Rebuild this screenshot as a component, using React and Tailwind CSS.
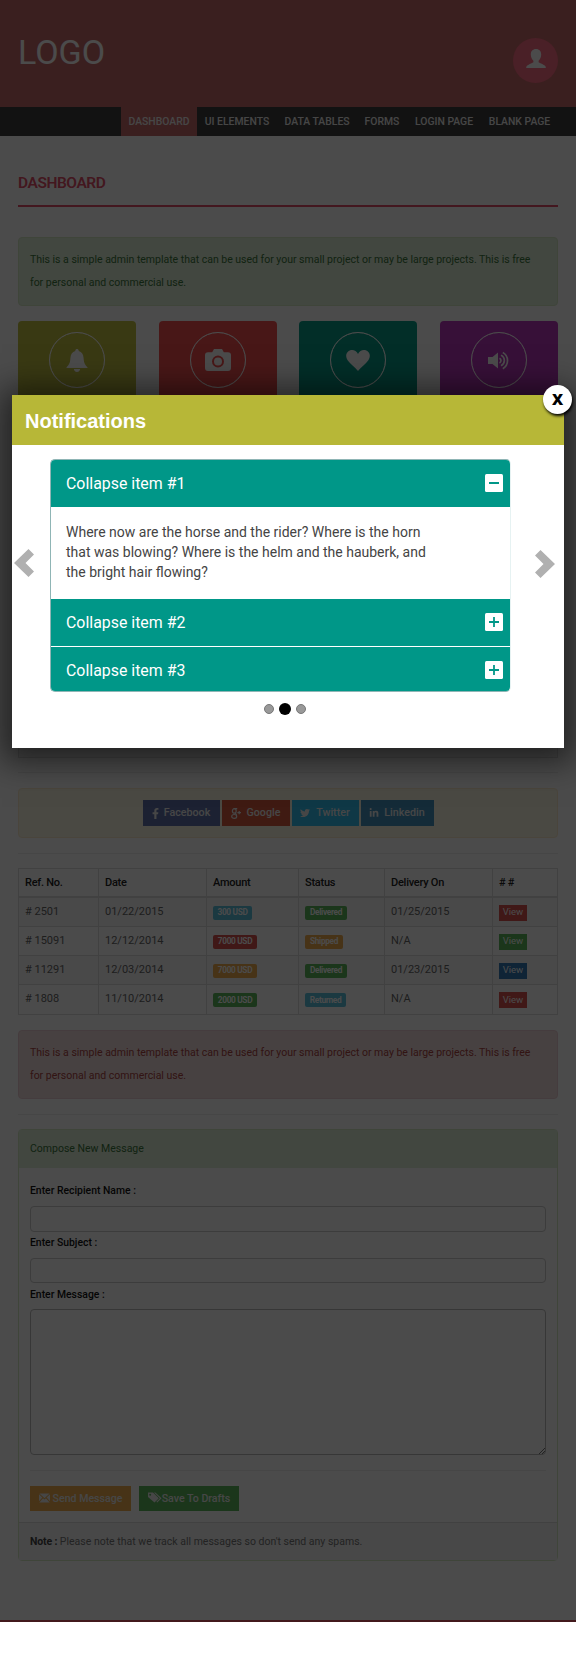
import React from "react";
import { FaFacebookF, FaTwitter, FaLinkedinIn } from "react-icons/fa";

const BellIcon = () => (
  <svg viewBox="0 0 22 23" className="h-[23px] w-[22px]" fill="currentColor">
    <path d="M11 0c1 0 1.700.7 1.700 1.600v.5C16 3 17.300 5.600 17.600 9c.3 4.500 1 6.500 3.900 9.200v.8H.5v-.8C3.400 15.500 4.100 13.500 4.400 9 4.700 5.600 6 3 9.300 2.100v-.5C9.300.7 10 0 11 0zM7.800 20h6.400c-.4 1.800-1.500 3-3.200 3s-2.800-1.200-3.200-3z" />
  </svg>
);

const CameraIcon = () => (
  <svg viewBox="0 0 26 22" className="h-[22px] w-[26px]" fill="currentColor" fillRule="evenodd">
    <path d="M9 0h8l1.800 3.300H23a3 3 0 0 1 3 3V19a3 3 0 0 1-3 3H3a3 3 0 0 1-3-3V6.300a3 3 0 0 1 3-3h4.200zM13 6.500a6 6 0 1 0 0 12 6 6 0 0 0 0-12zm0 2a4 4 0 1 1 0 8 4 4 0 0 1 0-8z" />
  </svg>
);

const HeartIcon = () => (
  <svg viewBox="0 0 24 21" className="h-[21px] w-[24px]" fill="currentColor">
    <path d="M12 21C9 17.300 4.500 14.200 2 10.800-.3 7.700-.4 4.200 1.700 1.900 4.600-1 10-.5 12 4c2-4.500 7.400-5 10.300-2.100 2.100 2.300 2 5.800-.3 8.900-2.500 3.400-7 6.500-10 10.200z" />
  </svg>
);

const VolumeIcon = () => (
  <svg viewBox="0 0 22 19" className="h-[19px] w-[22px]" fill="none" stroke="currentColor" strokeWidth="1.700">
    <path d="M0 6h4.500L10 1.500v16L4.500 13H0z" fill="currentColor" stroke="none" />
    <path d="M11.500 7.200a2.600 2.600 0 0 1 0 4.700M13 4.300a5.800 5.800 0 0 1 0 10.500M14.800 1.500a9.300 9.300 0 0 1 0 16.200" />
  </svg>
);

const UserIcon = () => (
  <svg viewBox="0 0 20 19" className="mb-[4px] h-[19px] w-[20px]" fill="currentColor">
    <path d="M10 0c3.300 0 5.200 2.200 5.200 5.600 0 2.500-1 4.900-2.600 6.200v1.400c2.500 1.300 5 2.300 6.500 3.600.6.600.7 1.400.7 2.200H.2c0-.8.1-1.600.7-2.200 1.500-1.300 4-2.300 6.500-3.600v-1.400C5.800 10.500 4.800 8.100 4.800 5.600 4.800 2.200 6.700 0 10 0z" />
  </svg>
);

const EnvelopeIcon = () => (
  <svg viewBox="0 0 12 10" className="mb-[2px] h-[10px] w-[11px]" fill="currentColor">
    <path d="M.4 0h11.200L6 5.200zM0 1l3.700 3.500L0 8.600zM12 1v7.600L8.300 4.500zM4.400 5.200 6 6.700l1.600-1.500L11.700 10H.3z" />
  </svg>
);

const TagsIcon = () => (
  <svg viewBox="0 0 14 11" className="mb-[2px] h-[11px] w-[14px]" fill="currentColor" fillRule="evenodd">
    <path d="M0 .5h5l5.800 5.800L6.500 10.600 0 4.900zM2.200 1.700a1 1 0 1 0 0 2 1 1 0 0 0 0-2zM6 .5h1.400l6.200 5.800-4.300 4.300-.9-.8L11.900 6.300z" />
  </svg>
);

const GooglePlusIcon = () => (
  <svg viewBox="0 0 10 11" className="h-[11px] w-[10px]" fill="none" stroke="currentColor" strokeWidth="1.200">
    <ellipse cx="3.300" cy="2.900" rx="1.900" ry="2.200" />
    <ellipse cx="3.200" cy="8.400" rx="2.500" ry="1.900" />
    <path d="M3 .6h3.200M4 5c1.300.7 1.500 1.300 1.500 2.500M6.400 4.600H10M8.200 2.900v3.400" />
  </svg>
);

const Chevron = ({ flip }) => (
  <svg viewBox="0 0 20 28" className={flip ? "mb-[24px] h-7 w-5 rotate-180" : "mb-[26px] h-7 w-5"} fill="#b0b0b0">
    <path d="M14.500 0 20 5.500 11.500 14l8.500 8.500-5.500 5.500L0 14z" />
  </svg>
);

const NAV = [
  ["UI ELEMENTS", "w-[65px]"],
  ["DATA TABLES", "w-[65px]"],
  ["FORMS", "w-[35px]"],
  ["LOGIN PAGE", "w-[59px]"],
  ["BLANK PAGE", "w-[62px]"],
];

const CARDS = [
  ["bg-[#c0c040]", <BellIcon />],
  ["bg-[#f55050]", <CameraIcon />],
  ["bg-[#0a9d88]", <HeartIcon />],
  ["bg-[#bb36bd]", <VolumeIcon />],
];

const SOCIAL = [
  ["Facebook", "bg-[#5f70a9] w-[77px] gap-[5px]", <FaFacebookF className="h-[11px] w-[7px]" />],
  ["Google", "bg-[#d6583f] w-[68px] gap-[6px]", <GooglePlusIcon />],
  ["Twitter", "bg-[#33bdee] w-[67px] gap-[6px]", <FaTwitter size={10} />],
  ["Linkedin", "bg-[#4492be] w-[73px] gap-[5px]", <FaLinkedinIn size={10} className="mb-[1px]" />],
];

const ROWS = [
  ["# 2501", "01/22/2015", "300 USD", "bg-[#5bc0de] w-[39px]", "Delivered", "bg-[#5cb85c] w-[42px]", "01/25/2015", "bg-[#d9534f]"],
  ["# 15091", "12/12/2014", "7000 USD", "bg-[#d9534f] w-[44px]", "Shipped", "bg-[#f0ad4e] w-[38px]", "N/A", "bg-[#5cb85c]"],
  ["# 11291", "12/03/2014", "7000 USD", "bg-[#f0ad4e] w-[44px]", "Delivered", "bg-[#5cb85c] w-[42px]", "01/23/2015", "bg-[#337ab7]"],
  ["# 1808", "11/10/2014", "2000 USD", "bg-[#5cb85c] w-[44px]", "Returned", "bg-[#5bc0de] w-[41px]", "N/A", "bg-[#d9534f]"],
];

const GRID = "grid grid-cols-[80px_108px_92px_86px_108px_66px]";

function Notice({ tone }) {
  return (
    <div className={"h-[69px] rounded border pl-[11px] pt-[11px] text-[10.5px] leading-[22.5px] tracking-[-0.010px] whitespace-nowrap " + tone}>
      <p>This is a simple admin template that can be used for your small project or may be large projects. This is free</p>
      <p>for personal and commercial use.</p>
    </div>
  );
}

function Badge({ tone, children }) {
  return (
    <span className={"mt-[1px] flex h-[14px] items-center justify-center rounded-[2px] text-[8.300px] font-bold tracking-[-0.330px] text-white " + tone}>
      {children}
    </span>
  );
}

function Cell({ last, head, children }) {
  return (
    <div className={"flex items-center border-[#ddd] pl-[6px] " + (last ? "" : "border-r ") + (head ? "pt-[1px]" : "")}>
      {children}
    </div>
  );
}

function Dashboard() {
  return (
    <div className="h-[1622px] border-b-2 border-[#e05560] bg-white">
      <header className="flex h-[107px] justify-between bg-[#c6696a] px-[18px] text-white">
        <h1 className="pt-[32px] text-[34px] leading-[41px]">LOGO</h1>
        <div className="mt-[38px] flex h-[45px] w-[45px] items-center justify-center rounded-full bg-[#fb6c84]">
          <UserIcon />
        </div>
      </header>
      <nav className="flex h-[29px] justify-end bg-[#3d3d3d] pr-[18px] text-[10.400px] font-medium leading-[29px] text-[#eee]">
        <div className="w-[76px] bg-[#c6696a] text-center">DASHBOARD</div>
        {NAV.map(([label, width]) => (
          <div key={label} className={"box-content px-[7.500px] text-center whitespace-nowrap " + width}>{label}</div>
        ))}
      </nav>
      <main className="px-[18px]">
        <h2 className="mt-[34px] h-[37px] border-b-2 border-[#e35069] text-[15.500px] font-semibold leading-[26px] tracking-[-0.450px] text-[#e35069]">DASHBOARD</h2>
        <div className="mt-[30px]">
          <Notice tone="border-[#d6e9c6] bg-[#dff0d8] text-[#3c763d]" />
        </div>
        <div className="mt-[15px] flex justify-between">
          {CARDS.map(([bg, icon], i) => (
            <div key={i} className={"flex h-[140px] w-[118px] justify-center rounded pt-[11px] text-white " + bg}>
              <div className="flex h-[56px] w-[56px] items-center justify-center rounded-full border-[1.500px] border-white outline outline-1 -outline-offset-1 outline-white/40">{icon}</div>
            </div>
          ))}
        </div>
        <div className="mt-[20px] h-[277px] border border-[#ddd] bg-[#f5f5f5]" />
        <hr className="mt-[14px] border-[#eee]" />
        <section className="mt-[15px] flex h-[50px] items-center justify-center gap-[2px] rounded border border-[#faebcc] bg-[#fcf8e3]">
          {SOCIAL.map(([name, cls, icon]) => (
            <div key={name} className={"flex h-[26px] items-center justify-center text-[10.700px] font-medium text-[#eee] " + cls}>
              {icon}
              <span>{name}</span>
            </div>
          ))}
        </section>
        <hr className="mt-[15px] border-[#eee]" />
        <section className="mt-[14px] border border-[#ddd] text-[11px] text-[#666]">
          <div className={GRID + " h-[29px] border-b-2 border-[#ddd] font-medium tracking-[-0.250px] text-[#222]"}>
            {["Ref. No.", "Date", "Amount", "Status", "Delivery On", "# #"].map((h) => (
              <Cell key={h} head last={h === "# #"}>{h}</Cell>
            ))}
          </div>
          {ROWS.map(([ref, date, amount, aTone, status, sTone, due, btn], i) => (
            <div key={ref} className={GRID + " h-[29px] border-[#ddd] " + (i % 2 ? "" : "bg-[#f9f9f9] ") + (i < 3 ? "border-b" : "")}>
              <Cell>{ref}</Cell>
              <Cell>{date}</Cell>
              <Cell><Badge tone={aTone}>{amount}</Badge></Cell>
              <Cell><Badge tone={sTone}>{status}</Badge></Cell>
              <Cell>{due}</Cell>
              <Cell last><span className={"mt-[1px] flex h-[16px] w-[28px] items-center justify-center text-[9.500px] text-white " + btn}>View</span></Cell>
            </div>
          ))}
        </section>
        <div className="mt-[15px]">
          <Notice tone="border-[#ebccd1] bg-[#f2dede] text-[#a94442]" />
        </div>
        <hr className="mt-[15px] border-[#eee]" />
        <section className="mt-[14px] rounded border border-[#d6e9c6]">
          <div className="h-[38px] bg-[#dff0d8] pl-[11px] text-[10.500px] leading-[38px] text-[#3c763d]">Compose New Message</div>
          <div className="h-[354px] px-[11px] pt-[12px] text-[10.400px] font-medium text-[#111]">
            <p className="h-[26px] leading-[22px]">Enter Recipient Name :</p>
            <div className="h-[26px] rounded border border-[#ccc]" />
            <p className="h-[26px] leading-[22px]">Enter Subject :</p>
            <div className="h-[25px] rounded border border-[#ccc]" />
            <p className="h-[26px] leading-[24px]">Enter Message :</p>
            <div className="flex h-[146px] items-end justify-end rounded border border-[#bbb]">
              <svg viewBox="0 0 6 6" className="h-[6px] w-[6px]" stroke="#555" strokeWidth="0.800">
                <path d="M0 6 6 0M3 6l3-3" />
              </svg>
            </div>
            <hr className="mt-[15px] border-[#eee]" />
            <div className="mt-[15px] flex gap-[8px] text-[10.600px] text-[#eee]">
              <div className="flex h-[25px] w-[101px] items-center justify-center gap-[3px] bg-[#f0ad4e]"><EnvelopeIcon />Send Message</div>
              <div className="flex h-[25px] w-[100px] items-center justify-center bg-[#5cb85c]"><TagsIcon />Save To Drafts</div>
            </div>
          </div>
          <div className="h-[38px] border-t border-[#ddd] bg-[#f5f5f5] pl-[11px] text-[10.500px] leading-[37px] text-[#777]">
            <b className="font-bold tracking-[-0.150px] text-[#444]">Note :</b> Please note that we track all messages so don't send any spams.
          </div>
        </section>
      </main>
    </div>
  );
}

function AccordionHead({ label, open, className }) {
  return (
    <div className={"flex items-center justify-between bg-[#009788] pl-[15px] pr-[7px] text-[15.900px] font-[450] text-white " + className}>
      <span>{label}</span>
      <svg viewBox="0 0 18 18" className="mb-[2px] h-[18px] w-[18px]">
        <rect width="18" height="18" rx="1.500" fill="#fff" />
        <path d={open ? "M4 9h10" : "M4 9h10M9 4v10"} stroke="#009788" strokeWidth="1.800" />
      </svg>
    </div>
  );
}

function Modal() {
  return (
    <div className="absolute left-[12px] top-[395px] h-[353px] w-[552px] bg-white shadow-[0_4px_30px_10px_rgba(0,0,0,0.550)]">
      <div className="h-[50px] bg-[#b7b737] pl-[13px] font-['Liberation_Sans',sans-serif] text-[20px] font-bold leading-[53px] text-white">Notifications</div>
      <div className="absolute -top-[10px] right-[-8px] flex h-[29px] w-[29px] items-center justify-center rounded-full bg-white font-['Open_Sans',sans-serif] text-[15.500px] font-extrabold leading-none text-black shadow-[1px_2px_3px_#000]">X</div>
      <div className="flex items-center pl-[2px] pt-[14px]">
        <Chevron />
        <div className="ml-[16px] mr-[24px] w-[461px] overflow-hidden rounded-[5px] border border-r-[#e6f2f2] border-y-[#8fb5b5] border-l-[#8fb5b5]">
          <AccordionHead open label="Collapse item #1" className="h-[47px]" />
          <div className="h-[92px] pl-[15px] pt-[15px] text-[14px] leading-[20px] whitespace-nowrap text-[#444]">
            <p>Where now are the horse and the rider? Where is the horn</p>
            <p>that was blowing? Where is the helm and the hauberk, and</p>
            <p>the bright hair flowing?</p>
          </div>
          <AccordionHead label="Collapse item #2" className="h-[47px]" />
          <AccordionHead label="Collapse item #3" className="h-[45px] border-t border-white pt-[4px]" />
        </div>
        <Chevron flip />
      </div>
      <div className="flex items-center justify-center gap-[5px] pt-[11px] pr-[6px]">
        <i className="h-[10px] w-[10px] rounded-full border border-[#777] bg-[#999]" />
        <i className="h-[12px] w-[12px] rounded-full bg-black" />
        <i className="h-[10px] w-[10px] rounded-full border border-[#777] bg-[#999]" />
      </div>
    </div>
  );
}

export default function App() {
  return (
    <div className="h-[1659px] w-[576px] overflow-hidden bg-white font-['Roboto',sans-serif]">
      <div className="relative h-[1622px]">
        <Dashboard />
        <div className="absolute inset-0 overflow-hidden bg-black/[.705]">
          <Modal />
        </div>
      </div>
    </div>
  );
}
